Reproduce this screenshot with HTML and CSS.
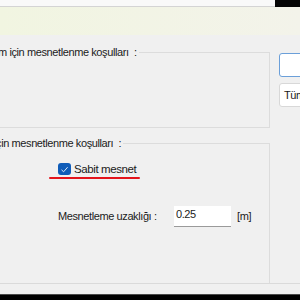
FILE: index.html
```html
<!DOCTYPE html>
<html lang="tr">
<head>
  <meta charset="UTF-8" />
  <meta name="viewport" content="width=device-width, initial-scale=1.0"/>
  <title>Mesnetlenme</title>
  <link rel="stylesheet" href="styles.css">
</head>
<body>

  <div class="topbar">
    <div class="topbar-left"></div>
    <div class="topbar-right"></div>
  </div>
  <div class="band"></div>

  <div class="main">
    <div class="left">
      <fieldset class="group group-top">
        <legend class="legend-top">m için mesnetlenme koşulları&nbsp; :</legend>
      </fieldset>

      <fieldset class="group group-bottom">
        <legend class="legend-bottom">için mesnetlenme koşulları&nbsp; :</legend>

        <label class="check-row">
          <span class="check">
            <svg width="9" height="9" viewBox="0 0 9 9"><path d="M1.5 4.8 L3.6 6.8 L7.6 2.2" fill="none" stroke="#dbe8f7" stroke-width="1"/></svg>
          </span>
          <span>Sabit mesnet</span>
        </label>

        <div class="field-row">
          <span class="field-label">Mesnetleme uzaklığı :</span>
          <input class="field-input" type="text" value="0.25" />
          <span class="unit">[m]</span>
        </div>
      </fieldset>
    </div>

    <div class="right">
      <div class="box box-focus"></div>
      <div class="box box-plain">Tüm</div>
    </div>
  </div>

  <div class="footer"></div>
  <div class="taskbar"></div>

</body>
</html>
```

FILE: styles.css
```css
body { margin: 0; padding: 0; width: 300px; height: 300px; overflow: hidden; background: #f0f0f0; font-family: "Liberation Sans", Arial, sans-serif; font-size: 11px; letter-spacing: -0.4px; color: #1b1b1b; }

/* window top */
.topbar { display: flex; height: 7px; }
.topbar-left { flex: 1; background: #f9f9f9; border-bottom: 1px solid #d4d4d4; }
.topbar-right { width: 25px; background: #050505; }
.band { height: 28px; background: linear-gradient(to right, #f1f5e1, #f3f3ea); }

/* content */
.main { display: flex; height: 248px; }
.left { width: 270px; padding-top: 10px; }
.right { margin-left: 9px; padding-top: 18px; display: flex; flex-direction: column; gap: 6px; }

.group { margin: 0 0 0 -20px; padding: 0; width: 290px; box-sizing: border-box; border: 1px solid #dcdcdc; min-inline-size: 0; }
.group legend { padding: 0 2px 0 0; line-height: 14px; white-space: nowrap; }
.group-top { height: 83px; }
.legend-top { margin-left: 17px; }
.group-bottom { margin-top: 8px; height: 147px; border-bottom: none; display: flex; flex-direction: column; padding-left: 77px; }
.legend-bottom { margin-left: -64px; }

/* checkbox */
.check-row { position: relative; display: flex; align-items: center; gap: 3px; margin-top: 13px; width: max-content; font-size: 11.5px; }
.check-row::after { content: ""; position: absolute; left: -9px; right: -4px; bottom: -4px; height: 2px; background: #e3141c; border-radius: 1px; }
.check { width: 13px; height: 12px; background: #0f5cb8; border-radius: 3px; display: flex; align-items: center; justify-content: center; }

/* distance row */
.field-row { display: flex; align-items: flex-start; margin-top: 31px; white-space: nowrap; }
.field-label { width: 116px; padding-top: 4px; }
.field-input { width: 57px; height: 21px; box-sizing: border-box; border: none; border-bottom: 1px solid #9a9a9a; background: #fff; font: inherit; letter-spacing: -0.4px; color: #1b1b1b; padding: 0 2px 5px; margin: 0; }
.unit { margin-left: 6px; padding-top: 4px; }

/* right side boxes */
.box { width: 40px; height: 24px; box-sizing: border-box; background: #fff; border-radius: 3px; white-space: nowrap; }
.box-focus { border: 1px solid #6b9fd9; }
.box-plain { border: 1px solid #d8d8d8; padding: 5px 0 0 4px; }

/* bottom */
.footer { height: 10px; border-top: 1px solid #dadada; }
.taskbar { height: 5px; background: #000; border-top: 1px solid #4a4a4a; }
```
